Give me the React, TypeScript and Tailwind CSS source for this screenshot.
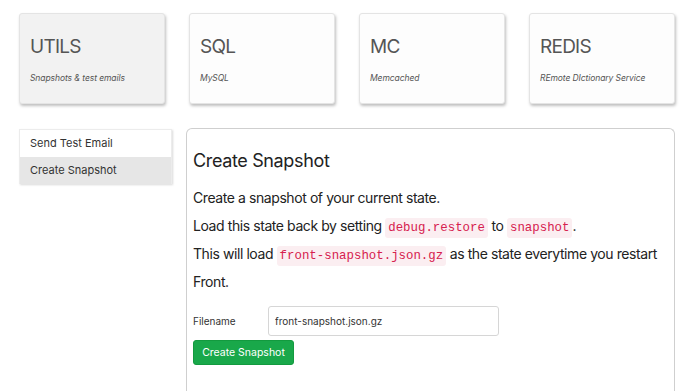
import React from "react";

const services = [
  { name: "UTILS", desc: "Snapshots & test emails", active: true },
  { name: "SQL", desc: "MySQL", active: false },
  { name: "MC", desc: "Memcached", active: false },
  { name: "REDIS", desc: "REmote DIctionary Service", active: false },
];

const Code = ({ children }: { children: React.ReactNode }) => (
  <code className="rounded-[3px] bg-[#fbeef1] px-[3px] py-[3px] font-['Liberation_Mono',monospace] text-[12.4px] leading-none tracking-normal text-[#d6204e]">
    {children}
  </code>
);

export default function App() {
  return (
    <div className="min-h-[391px] bg-white font-['Inter','Noto_Sans',sans-serif] text-[#222]">
      <div className="flex gap-6 pl-[19px] pt-[13px]">
        {services.map((s) => (
          <div
            key={s.name}
            className={`h-[91px] w-[146px] rounded-[3px] border border-[#e4e4e4] px-[10px] pt-[22px] shadow-[1px_2px_3px_rgba(0,0,0,0.25)] ${
              s.active ? "bg-[#f2f2f2]" : "bg-[#fdfdfd]"
            }`}
          >
            <h2 className="text-[19px] leading-[22px] tracking-[-0.04em] text-[#555]">{s.name}</h2>
            <p className="mt-[14px] text-[8.5px] italic tracking-[-0.01em] text-[#555]">{s.desc}</p>
          </div>
        ))}
      </div>

      <div className="mt-6 flex gap-[14px] pl-[19px]">
        <div className="mt-px h-[55px] w-[153px] shrink-0 border border-[#ececec] shadow-[1px_1px_2px_rgba(0,0,0,0.15)]">
          <div className="flex h-[27px] items-center px-[10px] text-[11px] text-[#333]">Send Test Email</div>
          <div className="flex h-[27px] items-center bg-[#e6e6e6] px-[10px] text-[11px] text-[#333]">
            Create Snapshot
          </div>
        </div>

        <div className="h-[270px] w-[489px] rounded-t-[6px] border border-b-0 border-[#cfcfcf] px-[6px] pt-[20px]">
          <h1 className="text-[18px] leading-[24px] tracking-[-0.02em] text-[#222]">Create Snapshot</h1>
          <div className="mt-[11px] text-[14px] leading-[28px] tracking-[-0.03em] text-[#222]">
            <p className="h-[28px]">Create a snapshot of your current state.</p>
            <p className="h-[28px]">
              Load this state back by setting <Code>debug.restore</Code> to <Code>snapshot</Code>.
            </p>
            <p className="h-[28px] whitespace-nowrap">
              This will load <Code>front-snapshot.json.gz</Code> as the state everytime you restart
            </p>
            <p className="h-[28px]">Front.</p>
          </div>

          <div className="mt-[10px] flex items-center">
            <label className="w-[75px] text-[10px] text-[#333]">Filename</label>
            <input
              readOnly
              value="front-snapshot.json.gz"
              className="h-[30px] w-[231px] rounded-[3px] border border-[#d6d6d6] px-[6px] text-[10px] text-[#333] outline-none"
            />
          </div>
          <button className="mt-[4px] h-[25px] w-[101px] rounded-[3px] border border-[#139a3f] bg-[#19a84a] text-[10.5px] text-white">
            Create Snapshot
          </button>
        </div>
      </div>
    </div>
  );
}
